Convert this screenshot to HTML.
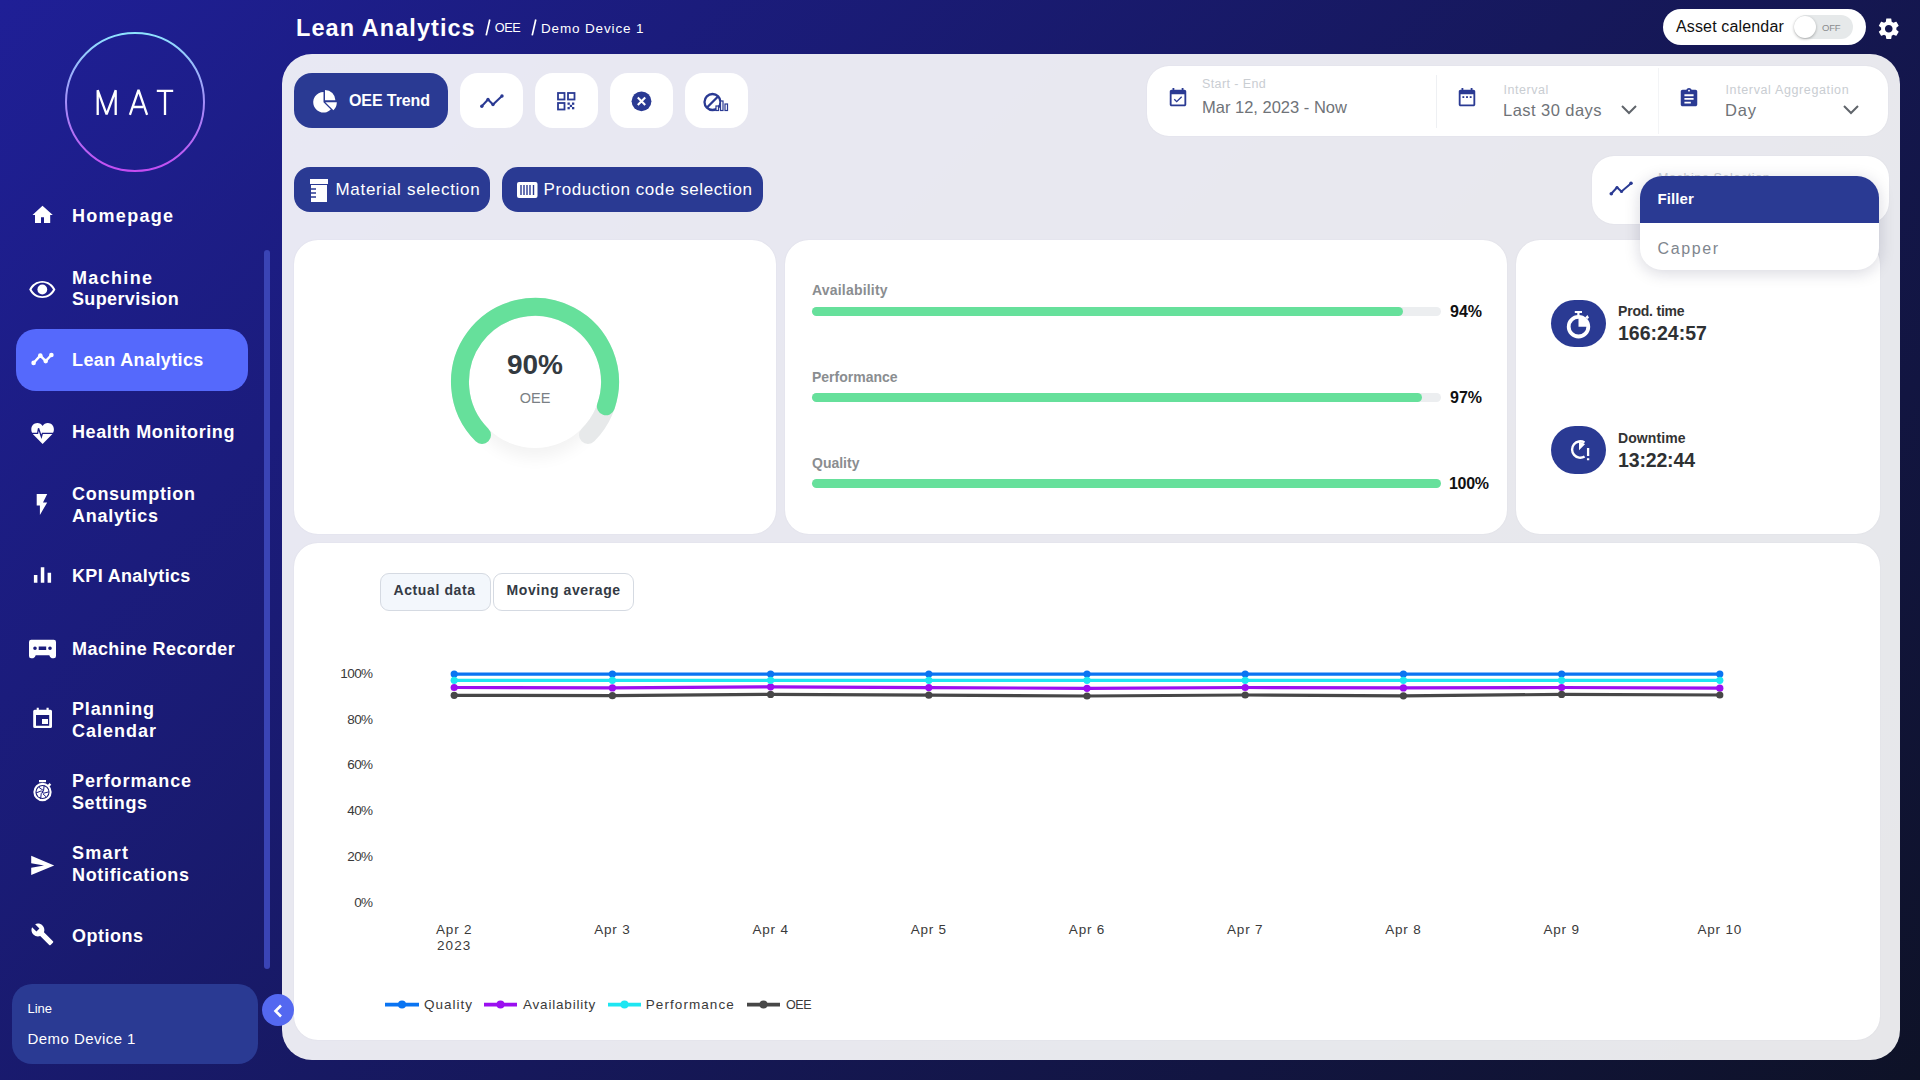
<!DOCTYPE html>
<html><head><meta charset="utf-8">
<style>
*{box-sizing:border-box;margin:0;padding:0}
html,body{width:1920px;height:1080px;overflow:hidden}
body{font-family:"Liberation Sans",sans-serif;background:linear-gradient(135deg,#1f1f96 0%,#0e1227 100%);position:relative;color:#fff}
.a{position:absolute;white-space:nowrap}
.nt{left:72px;font-weight:bold;font-size:18px;line-height:22px;color:#fff}
.nav{position:absolute;left:0;width:260px;height:62px}
.nav .ic{position:absolute;left:28px;top:50%;transform:translateY(-50%);width:28px;height:28px}
.nav .tx{position:absolute;left:72px;top:50%;transform:translateY(-50%);font-weight:bold;font-size:18px;line-height:22px;color:#fff}
.panel{position:absolute;left:282px;top:54px;width:1618px;height:1006px;background:rgba(255,255,255,.9);border-radius:30px}
.card{position:absolute;background:#fff;border-radius:24px;box-shadow:0 0 2px rgba(20,20,60,.06)}
.btn{position:absolute;border-radius:18px;background:#2a3a93}
.cl{font-size:13.5px;color:#3a3a3a;line-height:18px}
.wbtn{position:absolute;border-radius:18px;background:#fff;width:63px;height:55px;top:73px}
</style></head><body>

<!-- Logo -->
<svg class="a" style="left:60px;top:27px" width="150" height="150" viewBox="0 0 150 150">
<defs><linearGradient id="lg" x1="0" y1="0" x2="0" y2="1"><stop offset="0" stop-color="#8ee4ff"/><stop offset=".5" stop-color="#a48ff8"/><stop offset="1" stop-color="#c44cf2"/></linearGradient></defs>
<circle cx="75" cy="75" r="69" fill="none" stroke="url(#lg)" stroke-width="2"/>
<g fill="none" stroke="#fff" stroke-width="2.3" stroke-linejoin="miter" stroke-miterlimit="1">
<path d="M37.7 87.9V63.2L46.6 87.4 55.7 63.2V87.9"/>
<path d="M69.9 87.9L78.5 63 87.1 87.9M73.6 80H83.2"/>
<path d="M96.8 63.8H113.2M105 63.8V87.9"/>
</g>
</svg>
<!-- Sidebar nav -->
<div class="a" style="left:16px;top:329px;width:232px;height:62px;background:#5569fc;border-radius:20px"></div>
<svg class="a" style="left:0;top:180px" width="62" height="780" viewBox="0 180 62 780">
<g fill="#fff">
<path d="M42.5 205.7L32.5 215H35V223H41V217.2H44V223H50.2V215H52.8z"/>
<path fill-rule="evenodd" d="M42.3 281C36.5 281 31.5 284.5 29.2 289.5 31.5 294.5 36.5 298 42.3 298 48.1 298 53.1 294.5 55.4 289.5 53.1 284.5 48.1 281 42.3 281zM42.3 296.2C37.9 296.2 33.9 293.6 31.6 289.5 33.9 285.4 37.9 282.8 42.3 282.8 46.7 282.8 50.7 285.4 53 289.5 50.7 293.6 46.7 296.2 42.3 296.2z"/>
<circle cx="42.3" cy="289.5" r="4.9"/>
<path d="M33.5 363L40.3 355.6 45.7 361.1 51.6 354.8" fill="none" stroke="#fff" stroke-width="2.4"/>
<circle cx="33.6" cy="362.9" r="2.3"/><circle cx="40.3" cy="355.6" r="2.3"/><circle cx="45.7" cy="361.1" r="2.3"/><circle cx="51.4" cy="355" r="2.3"/>
<path d="M42.6 444L33 434.2C31.9 433 31.3 431.3 31.3 429.3 31.3 425.8 33.9 423 37.3 423 39.6 423 41.5 424.2 42.6 426.1 43.7 424.2 45.6 423 47.9 423 51.3 423 53.9 425.8 53.9 429.3 53.9 431.3 53.3 433 52.2 434.2z"/>
<path d="M30 433.4H37.6L38.5 428.3 41.4 436.8 42.4 433.4H55" fill="none" stroke="#1c1d86" stroke-width="1.3"/>
<path d="M36.7 494V505.6H39.9V515L47.2 502.4H43L47.2 494z"/>
<path d="M33.9 575H37.4V582.8H33.9zM40.8 567.2H44.3V582.8H40.8zM47.6 572.8H51.1V582.8H47.6z"/>
<path fill-rule="evenodd" d="M31.2 639.8H53.8Q56 639.8 56 642V656Q56 658.2 53.8 658.2H51.8Q50 658.2 49.3 655.3H35.7Q35 658.2 33.2 658.2H31.2Q29 658.2 29 656V642Q29 639.8 31.2 639.8zM35 646.4A1.8 1.8 0 1 0 35 650 1.8 1.8 0 1 0 35 646.4zM50 646.4A1.8 1.8 0 1 0 50 650 1.8 1.8 0 1 0 50 646.4zM38.7 646.5H46.2V650H38.7z"/>
<path fill-rule="evenodd" d="M36.7 707.8H38.8V709.8H46.5V707.8H48.7V709.8H50.5Q52 709.8 52 711.3V726.5Q52 728 50.5 728H34.7Q33.2 728 33.2 726.5V711.3Q33.2 709.8 34.7 709.8H36.7zM36 715V725.7H49.2V715z"/>
<path d="M42 719H48V724H42z"/>
<path d="M39 780H46V782.2H39z"/>
<circle cx="42.5" cy="792" r="8.1" fill="none" stroke="#fff" stroke-width="2.1"/>
<path d="M48.3 786L50.4 783.9" stroke="#fff" stroke-width="2.4"/>
<circle cx="42.5" cy="792" r="6" fill="#fff"/>
<g fill="none" stroke="#1c1c82" stroke-width="1"><path d="M44 791L38.9 787.3M43.3 793.3L49 791.8M41.3 793.1L40.6 799M41.6 790.8L35.8 793M43.6 790.3L44.2 785.2M42.8 793.7L46.6 797.3"/></g>
<circle cx="42.5" cy="792" r="1.1" fill="#1c1c82"/>
<path d="M31.2 855.8L54.2 865.5 31.2 875V867.7L44 865.5 31.2 863.2z"/>
<path transform="translate(30.5 922.5) scale(0.99)" d="M22.7 19l-9.1-9.1c.9-2.3.4-5-1.5-6.9-2-2-5-2.4-7.4-1.3L9 6 6 9 1.6 4.7C.4 7.1.9 10.1 2.9 12.1c1.9 1.9 4.6 2.4 6.9 1.5l9.1 9.1c.4.4 1 .4 1.4 0l2.3-2.3c.5-.4.5-1.1.1-1.4z"/>
</g>
</svg>
<div class="a nt" style="top:205.2px;letter-spacing:1.29px">Homepage</div>
<div class="a nt" style="top:266.5px;letter-spacing:1.33px">Machine</div>
<div class="a nt" style="top:288.2px;letter-spacing:0.36px">Supervision</div>
<div class="a nt" style="top:349.2px;letter-spacing:0.38px">Lean Analytics</div>
<div class="a nt" style="top:420.9px;letter-spacing:0.59px">Health Monitoring</div>
<div class="a nt" style="top:483.4px;letter-spacing:0.7px">Consumption</div>
<div class="a nt" style="top:505.1px;letter-spacing:0.75px">Analytics</div>
<div class="a nt" style="top:565.4px;letter-spacing:0.33px">KPI Analytics</div>
<div class="a nt" style="top:637.6px;letter-spacing:0.44px">Machine Recorder</div>
<div class="a nt" style="top:698.4px;letter-spacing:0.86px">Planning</div>
<div class="a nt" style="top:720.2px;letter-spacing:1.0px">Calendar</div>
<div class="a nt" style="top:770.4px;letter-spacing:0.9px">Performance</div>
<div class="a nt" style="top:792.2px;letter-spacing:0.57px">Settings</div>
<div class="a nt" style="top:842.4px;letter-spacing:1.25px">Smart</div>
<div class="a nt" style="top:864.2px;letter-spacing:0.67px">Notifications</div>
<div class="a nt" style="top:924.9px;letter-spacing:0.5px">Options</div>

<!-- scrollbar -->
<div class="a" style="left:264px;top:250px;width:6px;height:719px;background:#3a44b5;border-radius:3px"></div>

<!-- Line box -->
<div class="a" style="left:12px;top:984px;width:246px;height:80px;background:#2a3a93;border-radius:20px"></div>
<div class="a" style="left:27.5px;top:1000.7px;font-size:13px;color:#fff">Line</div>
<div class="a" style="left:27.5px;top:1030px;font-size:15px;color:#fff;letter-spacing:.45px">Demo Device 1</div>

<!-- Header -->
<div class="a" style="left:296px;top:14.5px;font-size:23.5px;font-weight:bold;letter-spacing:1.05px">Lean Analytics</div>
<svg class="a" style="left:480px;top:15px" width="60" height="25" viewBox="480 15 60 25"><path d="M486.2 35.4L489.8 19.5M532.2 35.4L535.8 19.5" stroke="#fff" stroke-width="1.7"/></svg>
<div class="a" style="left:494.8px;top:21.3px;font-size:12.7px;letter-spacing:-.5px">OEE</div>
<div class="a" style="left:541px;top:20.5px;font-size:13.5px;letter-spacing:.85px">Demo Device 1</div>
<div class="a" style="left:1663px;top:9px;width:203px;height:36px;background:#fff;border-radius:18px"></div>
<div class="a" style="left:1676px;top:18px;font-size:16px;color:#111;letter-spacing:.15px">Asset calendar</div>
<div class="a" style="left:1794px;top:15px;width:58.5px;height:24px;background:#e6e9ea;border-radius:12px"></div>
<div class="a" style="left:1793.5px;top:16px;width:22.3px;height:22.3px;background:#fff;border-radius:50%;box-shadow:0 1px 3px rgba(0,0,0,.3)"></div>
<div class="a" style="left:1822px;top:21.5px;font-size:9.5px;color:#8a8c8e;letter-spacing:-.2px">OFF</div>
<svg class="a" style="left:1875.5px;top:15.8px" width="25.5" height="25.5" viewBox="0 0 24 24"><path fill="#fff" d="M19.14 12.94c.04-.3.06-.61.06-.94 0-.32-.02-.64-.07-.94l2.03-1.58c.18-.14.23-.41.12-.61l-1.92-3.32c-.12-.22-.37-.29-.59-.22l-2.39.96c-.5-.38-1.03-.7-1.62-.94l-.36-2.54c-.04-.24-.24-.41-.48-.41h-3.84c-.24 0-.43.17-.47.41l-.36 2.54c-.59.24-1.13.57-1.62.94l-2.39-.96c-.22-.08-.47 0-.59.22L2.74 8.87c-.12.21-.08.47.12.61l2.03 1.58c-.05.3-.09.63-.09.94s.02.64.07.94l-2.03 1.58c-.18.14-.23.41-.12.61l1.92 3.32c.12.22.37.29.59.22l2.39-.96c.5.38 1.03.7 1.62.94l.36 2.54c.05.24.24.41.48.41h3.84c.24 0 .44-.17.47-.41l.36-2.54c.59-.24 1.13-.56 1.62-.94l2.39.96c.22.08.47 0 .59-.22l1.92-3.32c.12-.22.07-.47-.12-.61l-2.01-1.58zM12 15.6c-1.98 0-3.6-1.62-3.6-3.6s1.62-3.6 3.6-3.6 3.6 1.62 3.6 3.6-1.62 3.6-3.6 3.6z"/></svg>

<!-- collapse btn -->
<div class="a" style="left:262px;top:994px;width:32px;height:32px;border-radius:50%;background:#5468f0;z-index:5"></div>
<svg class="a" style="left:270px;top:1002px;z-index:6" width="16" height="16" viewBox="0 0 16 16"><path d="M11 3.5L5.5 9l5.5 5.5" fill="none" stroke="#fff" stroke-width="2.6"/></svg>

<!-- Main panel -->
<div class="panel"></div>

<!-- toolbar -->
<div class="btn" style="left:294px;top:73px;width:154px;height:55px"></div>
<svg class="a" style="left:300px;top:80px" width="50" height="40" viewBox="300 80 50 40"><g fill="#fff"><path d="M323.5 102.3V92A10.3 10.3 0 1 0 330.8 109.6Z"/><path d="M325 100.3V89.9A10.4 10.4 0 0 1 335.4 100.3Z"/><path d="M325.3 102.2H336.8A11.5 11.5 0 0 1 333.4 110.3Z"/></g></svg>
<div class="a" style="left:349px;top:92px;font-size:16px;font-weight:bold;letter-spacing:-.1px">OEE Trend</div>

<div class="wbtn" style="left:460px"></div>
<svg class="a" style="left:480px;top:94px" width="24" height="14" viewBox="0 0 24 14"><g fill="#2a3a93"><path d="M1.5 12.5L8 5.5l5 5L22.5 1.5" fill="none" stroke="#2a3a93" stroke-width="2"/><circle cx="1.8" cy="12.2" r="1.7"/><circle cx="8" cy="5.5" r="1.7"/><circle cx="13" cy="10.5" r="1.7"/><circle cx="22" cy="2" r="1.7"/></g></svg>
<div class="wbtn" style="left:535px"></div>
<svg class="a" style="left:557px;top:92px" width="19" height="19" viewBox="0 0 19 19"><g fill="none" stroke="#2a3a93" stroke-width="1.8"><rect x="1" y="1" width="6.5" height="6.5"/><rect x="11" y="1" width="6.5" height="6.5"/><rect x="1" y="11" width="6.5" height="6.5"/></g><g fill="#2a3a93"><rect x="10.5" y="10.5" width="2.3" height="2.3"/><rect x="15" y="10.5" width="2.3" height="2.3"/><rect x="12.8" y="12.8" width="2.3" height="2.3"/><rect x="10.5" y="15" width="2.3" height="2.3"/><rect x="15" y="15" width="2.3" height="2.3"/></g></svg>
<div class="wbtn" style="left:610px"></div>
<svg class="a" style="left:631px;top:91px" width="21" height="21" viewBox="0 0 21 21"><circle cx="10.5" cy="10.3" r="9.9" fill="#2a3a93"/><path d="M6.8 6.6l7.4 7.4M14.2 6.6l-7.4 7.4" stroke="#fff" stroke-width="2.1"/></svg>
<div class="wbtn" style="left:685px"></div>
<svg class="a" style="left:703px;top:92px" width="27" height="20" viewBox="0 0 27 20"><g fill="none" stroke="#2a3a93"><circle cx="9.5" cy="10" r="8" stroke-width="2.3"/><path d="M4 15.5L15 4.5" stroke-width="2.3"/><rect x="13" y="14" width="2.5" height="4.5" fill="#fff" stroke-width="1.2"/><rect x="17.5" y="9" width="2.5" height="9.5" fill="#fff" stroke-width="1.2"/><rect x="22" y="12" width="2.5" height="6.5" fill="#fff" stroke-width="1.2"/></g></svg>

<!-- date card -->
<div class="card" style="left:1147px;top:66px;width:741px;height:70px;border-radius:22px"></div>
<div class="a" style="left:1436px;top:75px;width:1px;height:53px;background:#eef0f3"></div>
<div class="a" style="left:1658px;top:68px;width:1px;height:66px;background:#f3f4f6"></div>
<svg class="a" style="left:1167px;top:87px" width="22" height="22" viewBox="0 0 24 24"><path fill="#2a3a93" d="M16.53 11.06L15.47 10l-4.88 4.88-2.12-2.12-1.06 1.06L10.59 17l5.94-5.94zM19 3h-1V1h-2v2H8V1H6v2H5c-1.11 0-1.99.9-1.99 2L3 19c0 1.1.89 2 2 2h14c1.1 0 2-.9 2-2V5c0-1.1-.9-2-2-2zm0 16H5V8h14v11z"/></svg>
<div class="a" style="left:1202px;top:77px;font-size:12.5px;color:#c9cdd2;letter-spacing:.4px">Start - End</div>
<div class="a" style="left:1202px;top:98px;font-size:16.5px;color:#6f7378;letter-spacing:0px">Mar 12, 2023 - Now</div>
<svg class="a" style="left:1456px;top:87px" width="22" height="22" viewBox="0 0 24 24"><path fill="#2a3a93" d="M19 3h-1V1h-2v2H8V1H6v2H5c-1.11 0-2 .9-2 2v14c0 1.1.89 2 2 2h14c1.1 0 2-.9 2-2V5c0-1.1-.9-2-2-2zm0 16H5V8h14v11z"/><rect x="7" y="10" width="2" height="2" fill="#2a3a93"/><rect x="11" y="10" width="2" height="2" fill="#2a3a93"/><rect x="15" y="10" width="2" height="2" fill="#2a3a93"/></svg>
<div class="a" style="left:1503.5px;top:82.5px;font-size:12.5px;color:#c9cdd2;letter-spacing:.55px">Interval</div>
<div class="a" style="left:1503px;top:101px;font-size:16.5px;color:#6f7378;letter-spacing:.45px">Last 30 days</div>
<svg class="a" style="left:1620px;top:103px" width="18" height="14" viewBox="0 0 18 14"><path d="M2 3l7 7 7-7" fill="none" stroke="#60656b" stroke-width="2"/></svg>
<svg class="a" style="left:1678px;top:87px" width="22" height="22" viewBox="0 0 24 24"><path fill="#2a3a93" d="M19 3h-4.18C14.4 1.84 13.3 1 12 1c-1.3 0-2.4.84-2.82 2H5c-1.1 0-2 .9-2 2v14c0 1.1.9 2 2 2h14c1.1 0 2-.9 2-2V5c0-1.1-.9-2-2-2zm-7 0c.55 0 1 .45 1 1s-.45 1-1 1-1-.45-1-1 .45-1 1-1z"/><path d="M7 9h10M7 13h10M7 17h7" stroke="#fff" stroke-width="2"/></svg>
<div class="a" style="left:1725.5px;top:82.5px;font-size:12.5px;color:#c9cdd2;letter-spacing:.63px">Interval Aggregation</div>
<div class="a" style="left:1725px;top:101px;font-size:16.5px;color:#6f7378;letter-spacing:.8px">Day</div>
<svg class="a" style="left:1842px;top:103px" width="18" height="14" viewBox="0 0 18 14"><path d="M2 3l7 7 7-7" fill="none" stroke="#60656b" stroke-width="2"/></svg>

<!-- row2 -->
<div class="btn" style="left:294px;top:167px;width:196px;height:45px;border-radius:16px"></div>
<svg class="a" style="left:309px;top:178px" width="20" height="25" viewBox="0 0 20 25"><path fill="#fff" d="M1 1h18v5H1zM2 7h16v17H2z"/><path d="M2 11h5M2 15h5M2 19h5" stroke="#2a3a93" stroke-width="1.6"/></svg>
<div class="a" style="left:335.5px;top:180px;font-size:17px;letter-spacing:.7px">Material selection</div>
<div class="btn" style="left:502px;top:167px;width:261px;height:45px;border-radius:16px"></div>
<svg class="a" style="left:517px;top:182px" width="21" height="16" viewBox="0 0 21 16"><rect x="0" y="0" width="20.5" height="16" rx="2" fill="#fff"/><path d="M4 3v10M7 3v10M10 3v10M13 3v10M16.5 3v10" stroke="#2a3a93" stroke-width="1.4"/></svg>
<div class="a" style="left:543.5px;top:180px;font-size:17px;letter-spacing:.57px">Production code selection</div>

<div class="card" style="left:1592px;top:156px;width:297px;height:68px;border-radius:22px"></div>
<svg class="a" style="left:1609px;top:180px" width="25" height="16" viewBox="0 0 25 16"><g fill="#2a3a93"><path d="M2 14L8 7.5l4.5 4L22.5 3" fill="none" stroke="#2a3a93" stroke-width="2"/><circle cx="2.3" cy="13.7" r="1.8"/><circle cx="8" cy="7.5" r="1.6"/><circle cx="12.5" cy="11.5" r="1.6"/><circle cx="22" cy="3.3" r="1.8"/></g></svg>
<div class="a" style="left:1658px;top:171px;font-size:12.5px;color:#c9cdd2;letter-spacing:.6px">Machine Selection</div>
<div class="a" style="left:1640px;top:175.7px;width:239px;height:94.5px;background:#fff;border-radius:22px;box-shadow:0 3px 16px rgba(20,20,60,.17);overflow:hidden;z-index:20">
  <div style="position:absolute;left:0;top:0;width:100%;height:47.3px;background:#2a3a93"></div>
  <div class="a" style="left:17.5px;top:14.5px;font-size:15px;font-weight:bold;color:#fff;letter-spacing:.1px">Filler</div>
  <div class="a" style="left:17.5px;top:64px;font-size:16px;color:#80868e;letter-spacing:1.6px">Capper</div>
</div>

<!-- cards -->
<div class="card" style="left:294px;top:240px;width:482px;height:294px"></div>
<div class="card" style="left:785px;top:240px;width:722px;height:294px"></div>
<div class="card" style="left:1516px;top:240px;width:364px;height:294px"></div>
<div class="card" style="left:294px;top:543px;width:1586px;height:497px"></div>

<!-- gauge -->
<div class="a" style="left:469px;top:316px;width:132px;height:132px;border-radius:50%;background:#fff;box-shadow:0 10px 16px rgba(0,0,0,.05)"></div>
<svg class="a" style="left:435px;top:282px" width="200" height="200" viewBox="0 0 200 200">
<path d="M47 153 A75 75 0 1 1 153 153" fill="none" stroke="#e7e9ea" stroke-width="18" stroke-linecap="round"/>
<path d="M47 153 A75 75 0 1 1 170.9 124.3" fill="none" stroke="#66e09b" stroke-width="18" stroke-linecap="round"/>
</svg>
<div class="a" style="left:435px;top:349px;width:200px;text-align:center;font-size:28px;font-weight:bold;color:#333a40">90%</div>
<div class="a" style="left:435px;top:390px;width:200px;text-align:center;font-size:14.5px;color:#7a7f85">OEE</div>

<!-- bars -->
<div class="a" style="left:812px;top:282px;font-size:14px;font-weight:bold;color:#8a8d90;letter-spacing:.2px">Availability</div>
<div class="a" style="left:812px;top:307px;width:629px;height:9px;border-radius:5px;background:#eceef0"><div style="width:591px;height:9px;border-radius:5px;background:#66e09b"></div></div>
<div class="a" style="left:1450px;top:303px;font-size:16px;font-weight:bold;color:#111">94%</div>
<div class="a" style="left:812px;top:369px;font-size:14px;font-weight:bold;color:#8a8d90">Performance</div>
<div class="a" style="left:812px;top:393px;width:629px;height:9px;border-radius:5px;background:#eceef0"><div style="width:610px;height:9px;border-radius:5px;background:#66e09b"></div></div>
<div class="a" style="left:1450px;top:389px;font-size:16px;font-weight:bold;color:#111">97%</div>
<div class="a" style="left:812px;top:455px;font-size:14px;font-weight:bold;color:#8a8d90">Quality</div>
<div class="a" style="left:812px;top:479px;width:629px;height:9px;border-radius:5px;background:#66e09b"></div>
<div class="a" style="left:1449px;top:475px;font-size:16px;font-weight:bold;color:#111;letter-spacing:-.3px">100%</div>

<!-- times -->
<div class="a" style="left:1551px;top:300px;width:55px;height:47px;border-radius:24px;background:#2a3a93"></div>
<svg class="a" style="left:1551px;top:300px" width="55" height="47" viewBox="1551 300 55 47"><circle cx="1578.5" cy="326.7" r="9.8" fill="none" stroke="#fff" stroke-width="3.8"/><path d="M1578.5 326.7V317.5A9.2 9.2 0 0 1 1587.7 326.7Z" fill="#fff"/><path d="M1574.8 312H1582M1578.4 312V316" stroke="#fff" stroke-width="2.2"/><path d="M1585 317.5L1587.5 315 1589 317.8 1587.5 319z" fill="#fff"/></svg>
<div class="a" style="left:1618px;top:303px;font-size:14px;font-weight:bold;color:#333;letter-spacing:-.2px">Prod. time</div>
<div class="a" style="left:1618px;top:322px;font-size:19.5px;font-weight:bold;color:#2f3133">166:24:57</div>
<div class="a" style="left:1551px;top:426px;width:55px;height:48px;border-radius:24px;background:#2a3a93"></div>
<svg class="a" style="left:1551px;top:426px" width="55" height="48" viewBox="1551 426 55 48"><path d="M1584.5 442.5A8.2 8.2 0 1 0 1584.6 456.5" fill="none" stroke="#fff" stroke-width="2.4"/><path d="M1579 450.3V441.8A8.5 8.5 0 0 1 1585 444.3Z" fill="#fff"/><path d="M1588.1 448V456M1588.1 458.2V460.2" stroke="#fff" stroke-width="2.3"/></svg>
<div class="a" style="left:1618px;top:430px;font-size:14px;font-weight:bold;color:#333;letter-spacing:.1px">Downtime</div>
<div class="a" style="left:1618px;top:449px;font-size:19.5px;font-weight:bold;color:#2f3133;letter-spacing:-.15px">13:22:44</div>

<!-- chart tabs -->
<div class="a" style="left:380px;top:573px;width:111px;height:38px;border-radius:9px;background:#f3f7fc;border:1px solid #d5dae2"></div>
<div class="a" style="left:493px;top:573px;width:141px;height:38px;border-radius:9px;background:#fff;border:1px solid #d5dae2"></div>
<div class="a" style="left:393.5px;top:582px;font-size:14px;font-weight:bold;color:#333a44;letter-spacing:.6px">Actual data</div>
<div class="a" style="left:506.5px;top:582px;font-size:14px;font-weight:bold;color:#333a44;letter-spacing:.6px">Moving average</div>


<!-- chart -->
<svg class="a" style="left:0;top:0" width="1920" height="1080" viewBox="0 0 1920 1080">
<polyline points="454.2,674.1 612.4,674.1 770.6,674.1 928.8,674.1 1087.0,674.1 1245.2,674.1 1403.4,674.1 1561.6,674.1 1719.8,674.1" fill="none" stroke="#0a74f2" stroke-width="3.2"/>
<circle cx="454.2" cy="674.1" r="3.6" fill="#0a74f2"/>
<circle cx="612.4" cy="674.1" r="3.6" fill="#0a74f2"/>
<circle cx="770.6" cy="674.1" r="3.6" fill="#0a74f2"/>
<circle cx="928.8" cy="674.1" r="3.6" fill="#0a74f2"/>
<circle cx="1087.0" cy="674.1" r="3.6" fill="#0a74f2"/>
<circle cx="1245.2" cy="674.1" r="3.6" fill="#0a74f2"/>
<circle cx="1403.4" cy="674.1" r="3.6" fill="#0a74f2"/>
<circle cx="1561.6" cy="674.1" r="3.6" fill="#0a74f2"/>
<circle cx="1719.8" cy="674.1" r="3.6" fill="#0a74f2"/>
<polyline points="454.2,687.5 612.4,687.9 770.6,686.8 928.8,687.6 1087.0,688.3 1245.2,687.5 1403.4,687.9 1561.6,687.5 1719.8,688.2" fill="none" stroke="#9b0ff0" stroke-width="3.2"/>
<circle cx="454.2" cy="687.5" r="3.6" fill="#9b0ff0"/>
<circle cx="612.4" cy="687.9" r="3.6" fill="#9b0ff0"/>
<circle cx="770.6" cy="686.8" r="3.6" fill="#9b0ff0"/>
<circle cx="928.8" cy="687.6" r="3.6" fill="#9b0ff0"/>
<circle cx="1087.0" cy="688.3" r="3.6" fill="#9b0ff0"/>
<circle cx="1245.2" cy="687.5" r="3.6" fill="#9b0ff0"/>
<circle cx="1403.4" cy="687.9" r="3.6" fill="#9b0ff0"/>
<circle cx="1561.6" cy="687.5" r="3.6" fill="#9b0ff0"/>
<circle cx="1719.8" cy="688.2" r="3.6" fill="#9b0ff0"/>
<polyline points="454.2,680.3 612.4,680.3 770.6,680.3 928.8,680.3 1087.0,680.3 1245.2,680.3 1403.4,680.3 1561.6,680.3 1719.8,680.3" fill="none" stroke="#1ee6f2" stroke-width="3.2"/>
<circle cx="454.2" cy="680.3" r="3.6" fill="#1ee6f2"/>
<circle cx="612.4" cy="680.3" r="3.6" fill="#1ee6f2"/>
<circle cx="770.6" cy="680.3" r="3.6" fill="#1ee6f2"/>
<circle cx="928.8" cy="680.3" r="3.6" fill="#1ee6f2"/>
<circle cx="1087.0" cy="680.3" r="3.6" fill="#1ee6f2"/>
<circle cx="1245.2" cy="680.3" r="3.6" fill="#1ee6f2"/>
<circle cx="1403.4" cy="680.3" r="3.6" fill="#1ee6f2"/>
<circle cx="1561.6" cy="680.3" r="3.6" fill="#1ee6f2"/>
<circle cx="1719.8" cy="680.3" r="3.6" fill="#1ee6f2"/>
<polyline points="454.2,695.3 612.4,695.7 770.6,694.4 928.8,695.2 1087.0,696.0 1245.2,695.0 1403.4,695.8 1561.6,694.4 1719.8,695.0" fill="none" stroke="#474747" stroke-width="3.2"/>
<circle cx="454.2" cy="695.3" r="3.6" fill="#474747"/>
<circle cx="612.4" cy="695.7" r="3.6" fill="#474747"/>
<circle cx="770.6" cy="694.4" r="3.6" fill="#474747"/>
<circle cx="928.8" cy="695.2" r="3.6" fill="#474747"/>
<circle cx="1087.0" cy="696.0" r="3.6" fill="#474747"/>
<circle cx="1245.2" cy="695.0" r="3.6" fill="#474747"/>
<circle cx="1403.4" cy="695.8" r="3.6" fill="#474747"/>
<circle cx="1561.6" cy="694.4" r="3.6" fill="#474747"/>
<circle cx="1719.8" cy="695.0" r="3.6" fill="#474747"/>
<line x1="385" y1="1004.6" x2="419" y2="1004.6" stroke="#0a74f2" stroke-width="3.6"/><circle cx="402" cy="1004.6" r="4" fill="#0a74f2"/>
<line x1="484" y1="1004.6" x2="517" y2="1004.6" stroke="#9b0ff0" stroke-width="3.6"/><circle cx="500.5" cy="1004.6" r="4" fill="#9b0ff0"/>
<line x1="608" y1="1004.6" x2="641" y2="1004.6" stroke="#1ee6f2" stroke-width="3.6"/><circle cx="624.5" cy="1004.6" r="4" fill="#1ee6f2"/>
<line x1="747" y1="1004.6" x2="780" y2="1004.6" stroke="#474747" stroke-width="3.6"/><circle cx="763.5" cy="1004.6" r="4" fill="#474747"/>
</svg>
<div class="a cl" style="left:301px;width:71.5px;letter-spacing:-.6px;text-align:right;top:665.0px">100%</div>
<div class="a cl" style="left:301px;width:71.5px;letter-spacing:-.6px;text-align:right;top:710.7px">80%</div>
<div class="a cl" style="left:301px;width:71.5px;letter-spacing:-.6px;text-align:right;top:756.4px">60%</div>
<div class="a cl" style="left:301px;width:71.5px;letter-spacing:-.6px;text-align:right;top:802.0px">40%</div>
<div class="a cl" style="left:301px;width:71.5px;letter-spacing:-.6px;text-align:right;top:847.8px">20%</div>
<div class="a cl" style="left:301px;width:71.5px;letter-spacing:-.6px;text-align:right;top:893.5px">0%</div>
<div class="a cl" style="left:404.2px;width:100px;text-align:center;top:920.5px;letter-spacing:.8px">Apr 2</div>
<div class="a cl" style="left:562.4px;width:100px;text-align:center;top:920.5px;letter-spacing:.8px">Apr 3</div>
<div class="a cl" style="left:720.6px;width:100px;text-align:center;top:920.5px;letter-spacing:.8px">Apr 4</div>
<div class="a cl" style="left:878.8px;width:100px;text-align:center;top:920.5px;letter-spacing:.8px">Apr 5</div>
<div class="a cl" style="left:1037.0px;width:100px;text-align:center;top:920.5px;letter-spacing:.8px">Apr 6</div>
<div class="a cl" style="left:1195.2px;width:100px;text-align:center;top:920.5px;letter-spacing:.8px">Apr 7</div>
<div class="a cl" style="left:1353.4px;width:100px;text-align:center;top:920.5px;letter-spacing:.8px">Apr 8</div>
<div class="a cl" style="left:1511.6px;width:100px;text-align:center;top:920.5px;letter-spacing:.8px">Apr 9</div>
<div class="a cl" style="left:1669.8px;width:100px;text-align:center;top:920.5px;letter-spacing:.8px">Apr 10</div>
<div class="a cl" style="left:404.2px;width:100px;text-align:center;top:937px;letter-spacing:1.1px">2023</div>
<div class="a cl" style="left:424px;top:995.5px;letter-spacing:1px">Quality</div>
<div class="a cl" style="left:523px;top:995.5px;letter-spacing:.8px">Availability</div>
<div class="a cl" style="left:645.8px;top:995.5px;letter-spacing:1.07px">Performance</div>
<div class="a cl" style="left:786px;top:996px;font-size:12.5px;letter-spacing:-.45px">OEE</div>
</body></html>
